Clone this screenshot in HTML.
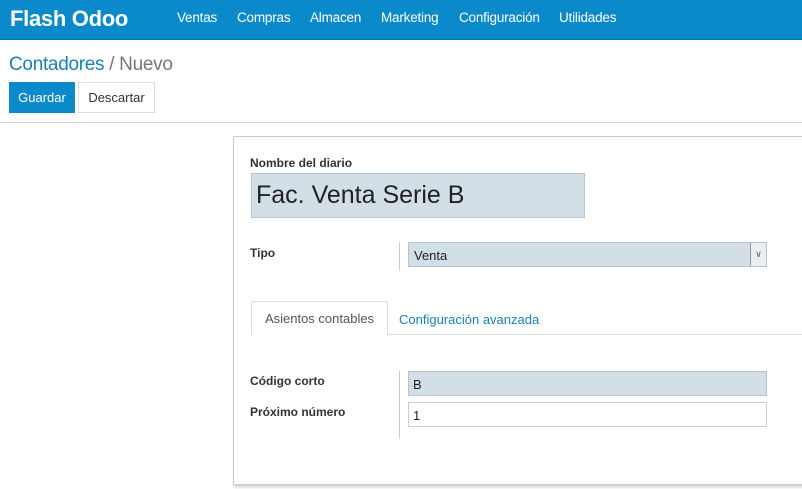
<!DOCTYPE html>
<html><head><style>
*{margin:0;padding:0;box-sizing:border-box}
body{width:802px;height:489px;overflow:hidden;background:#fff;font-family:"Liberation Sans",sans-serif;position:relative;color:#333}
.nav{position:absolute;left:0;top:0;width:802px;height:40px;background:#0a8acb;border-bottom:1px solid #0672a8}
.brand{position:absolute;left:10px;top:6px;color:#fff;font-size:22px;font-weight:bold;letter-spacing:-0.3px}
.menu{position:absolute;top:10px;color:#fff;font-size:13.5px;letter-spacing:-0.2px}
.bc{position:absolute;left:9px;top:54px;font-size:19px;color:#1a7fb6;letter-spacing:-0.3px}
.bc span{color:#777}
.btn{position:absolute;top:82px;height:31px;font-size:13px;line-height:31px;text-align:center}
.hr{position:absolute;left:0;top:122px;width:802px;height:1px;background:#d0d0d0}
.sheet{position:absolute;left:233px;top:136px;width:580px;height:349px;border:1px solid #ccc;background:#fff;box-shadow:1px 2px 3px rgba(0,0,0,.2)}
.lbl{position:absolute;font-size:12px;font-weight:bold;color:#333}
.inp{position:absolute;background:#d2dfe6;border:1px solid #b8c4cb;font-size:13px;color:#222}
.vl{position:absolute;width:1px;background:#ccc}
</style></head><body>
<div class="nav">
<div class="brand">Flash Odoo</div>
<div class="menu" style="left:177px">Ventas</div>
<div class="menu" style="left:237px">Compras</div>
<div class="menu" style="left:310px">Almacen</div>
<div class="menu" style="left:381px">Marketing</div>
<div class="menu" style="left:459px">Configuración</div>
<div class="menu" style="left:559px">Utilidades</div>
</div>
<div class="bc">Contadores <span>/ Nuevo</span></div>
<div class="btn" style="left:9px;width:66px;background:#0a8acb;color:#fff">Guardar</div>
<div class="btn" style="left:78px;width:77px;border:1px solid #ddd;color:#333;line-height:29px">Descartar</div>
<div class="hr"></div>
<div class="sheet">
<div class="lbl" style="left:16px;top:19px">Nombre del diario</div>
<div class="inp" style="left:17px;top:36px;width:334px;height:45px;font-size:25px;padding:7px 0 0 4px">Fac. Venta Serie B</div>
<div class="lbl" style="left:16px;top:109px">Tipo</div>
<div class="vl" style="left:165px;top:105px;height:29px"></div>
<div class="inp" style="left:174px;top:105px;width:359px;height:25px;padding:5px 0 0 5px">Venta
<div style="position:absolute;right:0;top:0;width:16px;height:23px;border-left:1px solid #999;background:#e8eef1;font-size:9px;text-align:center;line-height:22px;color:#555">&#8744;</div></div>
<div style="position:absolute;left:17px;top:197px;width:562px;height:1px;background:#ddd"></div>
<div style="position:absolute;left:17px;top:164px;width:137px;height:34px;border:1px solid #ddd;border-bottom:none;background:#fff;font-size:13px;color:#555;text-align:center;line-height:34px">Asientos contables</div>
<div style="position:absolute;left:165px;top:175px;font-size:13px;color:#1a7fb6">Configuración avanzada</div>
<div class="lbl" style="left:16px;top:237px">Código corto</div>
<div class="lbl" style="left:16px;top:268px">Próximo número</div>
<div class="vl" style="left:165px;top:234px;height:68px"></div>
<div class="inp" style="left:174px;top:234px;width:359px;height:25px;padding:5px 0 0 4px">B</div>
<div class="inp" style="left:174px;top:265px;width:359px;height:25px;padding:5px 0 0 4px;background:#fff;border-color:#ccc">1</div>
</div>
</body></html>
